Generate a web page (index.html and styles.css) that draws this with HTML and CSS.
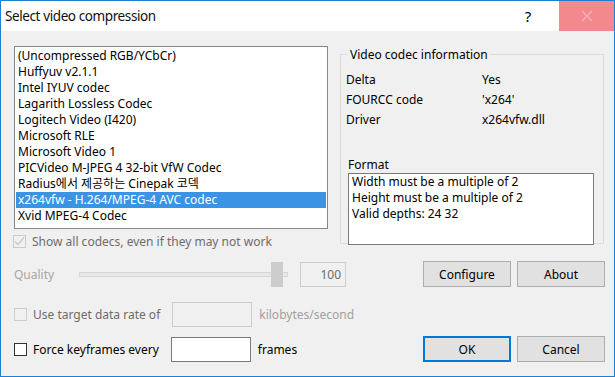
FILE: index.html
```html
<!DOCTYPE html>
<html lang="en">
<head>
	<meta charset="UTF-8">
	<title>Select video compression</title>
	<link rel="stylesheet" href="styles.css">
</head>
<body>
	<div class="window">
		<div class="titlebar">
			<span class="title">Select video compression</span>
			<span class="help">?</span>
			<span class="close">
				<svg width="12" height="12" viewBox="0 0 12 12"><path d="M1 1L11 11M11 1L1 11" stroke="#f6b3b8" stroke-width="1.2" fill="none"/></svg>
			</span>
		</div>
		<div class="body">
			<div class="top">
				<div class="left">
					<ul class="listbox">
						<li>(Uncompressed RGB/YCbCr)</li>
						<li>Huffyuv v2.1.1</li>
						<li>Intel IYUV codec</li>
						<li>Lagarith Lossless Codec</li>
						<li>Logitech Video (I420)</li>
						<li>Microsoft RLE</li>
						<li>Microsoft Video 1</li>
						<li>PICVideo M-JPEG 4 32-bit VfW Codec</li>
						<li>Radius에서 제공하는 Cinepak 코덱</li>
						<li class="selected">x264vfw - H.264/MPEG-4 AVC codec</li>
						<li>Xvid MPEG-4 Codec</li>
					</ul>
					<div class="check disabled show-all">
						<span class="box">
							<svg width="11" height="11" viewBox="0 0 11 11"><path d="M1 5.5L4 8.5L10 1.5" stroke="#c8c8c8" stroke-width="1.2" fill="none"/></svg>
						</span>
						<span>Show all codecs, even if they may not work</span>
					</div>
				</div>
				<fieldset class="info">
					<legend>Video codec information</legend>
					<div class="props">
						<span>Delta</span><span>Yes</span>
						<span>FOURCC code</span><span>'x264'</span>
						<span>Driver</span><span>x264vfw.dll</span>
					</div>
					<div class="format-label">Format</div>
					<div class="format">
						Width must be a multiple of 2<br>
						Height must be a multiple of 2<br>
						Valid depths: 24 32
					</div>
				</fieldset>
			</div>

			<div class="row quality">
				<div class="controls">
					<span class="quality-label">Quality</span>
					<div class="slider"><span class="track"></span><span class="thumb"></span></div>
					<span class="edit disabled num">100</span>
				</div>
				<div class="buttons">
					<button>Configure</button>
					<button>About</button>
				</div>
			</div>

			<div class="row rate">
				<div class="controls">
					<div class="check disabled">
						<span class="box"></span>
						<span>Use target data rate of</span>
					</div>
					<span class="edit disabled"></span>
					<span class="unit disabled-text">kilobytes/second</span>
				</div>
			</div>

			<div class="row last">
				<div class="controls">
					<div class="check">
						<span class="box"></span>
						<span>Force keyframes every</span>
					</div>
					<span class="edit"></span>
					<span class="unit">frames</span>
				</div>
				<div class="buttons">
					<button class="default">OK</button>
					<button>Cancel</button>
				</div>
			</div>
		</div>
	</div>
</body>
</html>
```

FILE: styles.css
```css
html, body {
	margin: 0;
	padding: 0;
}
body {
	font: 12px "Noto Sans", "Noto Sans CJK KR", sans-serif;
	color: #000;
	background: #fff;
}
.window {
	width: 615px;
	height: 377px;
	box-sizing: border-box;
	border: 1px solid #1c7fd6;
	background: #f0f0f0;
	display: flex;
	flex-direction: column;
}

/* title bar */
.titlebar {
	height: 30px;
	background: #fff;
	display: flex;
	align-items: center;
}
.title {
	flex: 1;
	padding-left: 4px;
	font-size: 13.5px;
	letter-spacing: -0.4px;
	color: #111;
}
.help {
	width: 30px;
	text-align: center;
	font-size: 15px;
	margin-right: 16px;
}
.close {
	width: 55px;
	height: 30px;
	background: #f3888f;
	display: flex;
	align-items: center;
	justify-content: center;
}

.body {
	padding: 15px 9px 0 12px;
	flex: 1;
}

/* top part */
.top {
	display: flex;
	gap: 12px;
}
.left {
	width: 314px;
	margin-left: 1px;
}
.listbox {
	list-style: none;
	margin: 0;
	padding: 1px;
	height: 179px;
	background: #fff;
	border: 1px solid #828790;
}
.listbox li {
	height: 16px;
	line-height: 16px;
	padding-left: 2px;
	white-space: nowrap;
}
.listbox li.selected {
	background: #3b93e6;
	color: #fff;
}

.check {
	display: flex;
	align-items: center;
	gap: 6px;
	height: 18px;
}
.check .box {
	width: 13px;
	height: 13px;
	box-sizing: border-box;
	border: 1px solid #333;
	background: #fff;
	display: flex;
	align-items: center;
	justify-content: center;
}
.check.disabled {
	color: #6d6d6d;
}
.check.disabled .box {
	border-color: #cccccc;
	background: #f0f0f0;
}
.show-all {
	margin-top: 3px;
	margin-left: -1px;
}

.info {
	margin: 0;
	padding: 9px 5px 0 5px;
	width: 264px;
	height: 198px;
	box-sizing: border-box;
	border: 1px solid #dcdcdc;
	border-radius: 0;
}
.info legend {
	padding: 0 2px;
	margin-left: 2px;
}
.props {
	display: grid;
	grid-template-columns: 136px 1fr;
	row-gap: 4px;
	line-height: 16px;
}
.format-label {
	margin-top: 29px;
	padding-left: 2px;
	line-height: 16px;
}
.format {
	margin-left: 2px;
	height: 72px;
	box-sizing: border-box;
	width: 246px;
	background: #fff;
	border: 1px solid #7a7a7a;
	padding: 0 3px;
	line-height: 16px;
}

/* bottom rows */
.row {
	display: flex;
	justify-content: space-between;
	align-items: center;
	height: 26px;
	margin-top: 14px;
}
.row.quality {
	margin-top: 11px;
}
.row.last {
	margin-top: 9px;
}
.controls {
	display: flex;
	align-items: center;
	margin-left: 1px;
}
.quality-label {
	color: #a8a8a8;
	width: 65px;
}
.slider {
	position: relative;
	width: 209px;
	height: 25px;
	display: flex;
	align-items: center;
	margin-right: 12px;
}
.slider .track {
	display: block;
	width: 100%;
	height: 3px;
	background: #e7e7e7;
	border: 1px solid #d6d6d6;
}
.slider .thumb {
	position: absolute;
	left: 192px;
	top: 0;
	width: 12px;
	height: 25px;
	background: #cccccc;
}
.edit {
	display: block;
	width: 80px;
	height: 25px;
	box-sizing: border-box;
	background: #fff;
	border: 1px solid #7a7a7a;
	margin-left: 12px;
}
.edit.disabled {
	background: #f0f0f0;
	border-color: #cccccc;
}
.edit.num {
	width: 46px;
	margin-left: 0;
	text-align: right;
	padding-right: 4px;
	line-height: 23px;
	color: #6d6d6d;
}
.unit {
	margin-left: 7px;
}
.disabled-text {
	color: #a0a0a0;
}
.buttons {
	display: flex;
	gap: 6px;
}
button {
	width: 88px;
	height: 26px;
	font: inherit;
	background: #e1e1e1;
	border: 1px solid #adadad;
	padding: 0;
	color: #000;
}
button.default {
	border-color: #0078d7;
	box-shadow: inset 0 0 0 1px #0078d7;
}
```
